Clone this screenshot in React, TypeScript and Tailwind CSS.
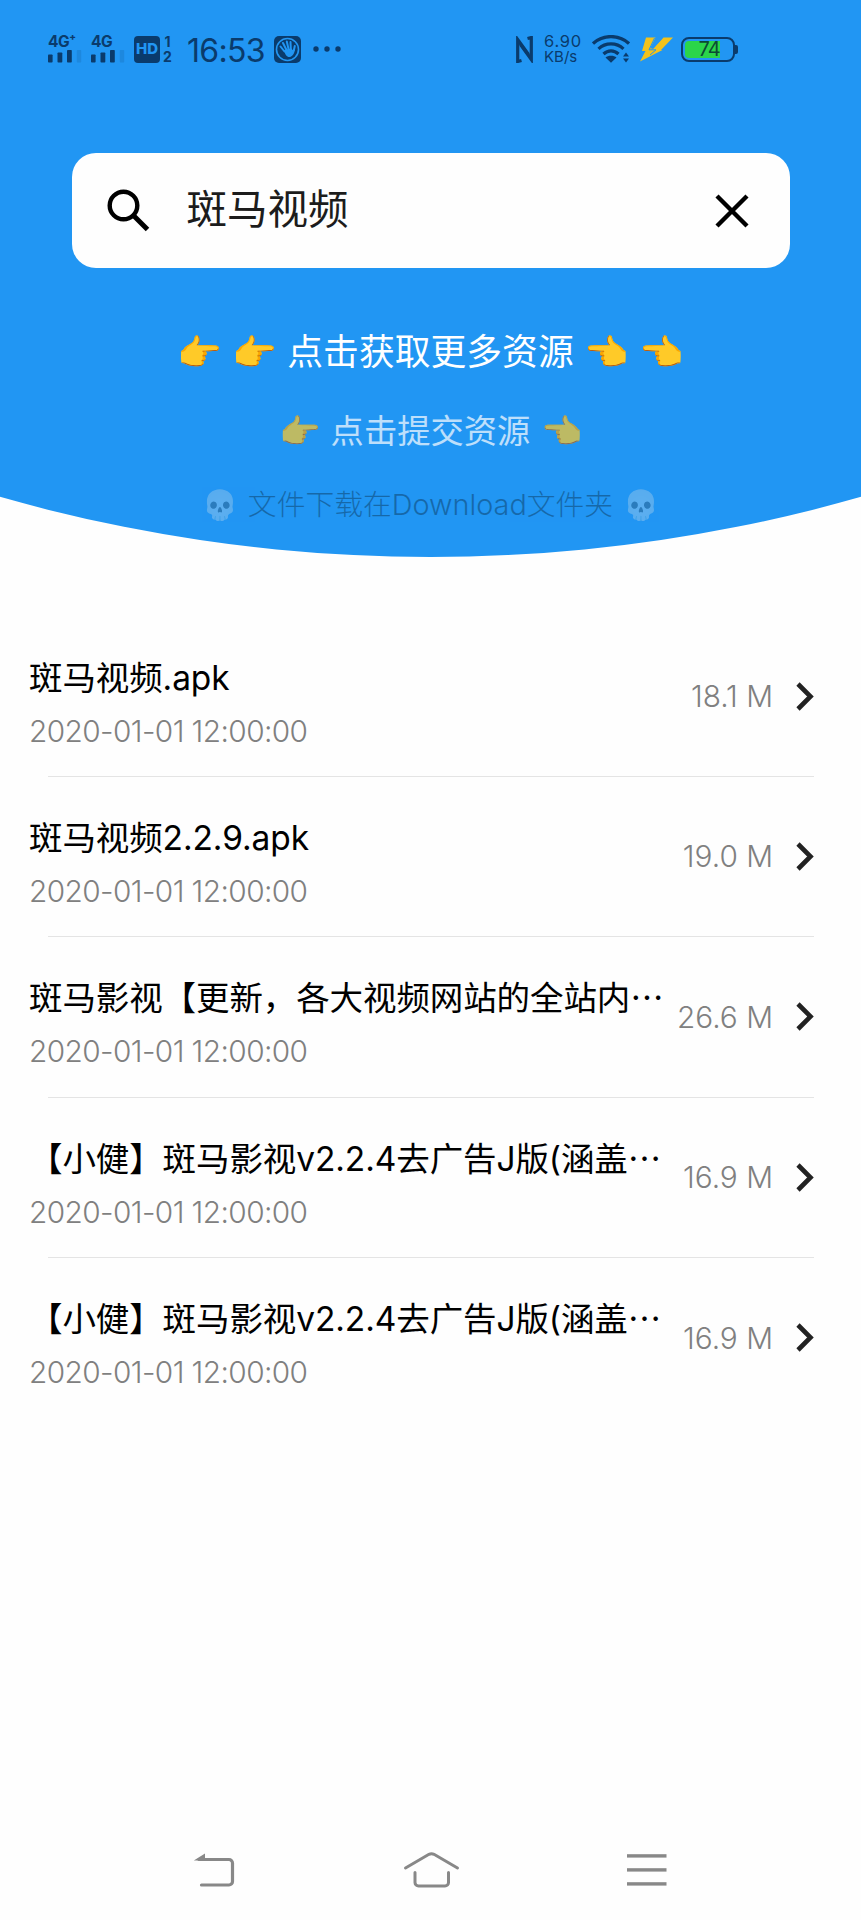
import React from "react";

type FileItem = {
  name: string;
  clipped?: boolean;
  date: string;
  size: string;
};

const files: FileItem[] = [
  { name: "斑马视频.apk", date: "2020-01-01 12:00:00", size: "18.1 M" },
  { name: "斑马视频2.2.9.apk", date: "2020-01-01 12:00:00", size: "19.0 M" },
  { name: "斑马影视【更新，各大视频网站的全站内", clipped: true, date: "2020-01-01 12:00:00", size: "26.6 M" },
  { name: "【小健】斑马影视v2.2.4去广告J版(涵盖", clipped: true, date: "2020-01-01 12:00:00", size: "16.9 M" },
  { name: "【小健】斑马影视v2.2.4去广告J版(涵盖", clipped: true, date: "2020-01-01 12:00:00", size: "16.9 M" },
];

function Signal({ label }: { label: string }) {
  return (
    <div className="flex w-[34px] flex-col">
      <span className="h-[14px] text-[15.5px] leading-[14px] font-bold tracking-[-0.5px] whitespace-nowrap">{label}</span>
      <svg className="mt-px h-[13px] w-[34px]" viewBox="0 0 34 13" fill="currentColor">
        <rect x="0" y="4.5" width="4.6" height="8" rx="0.8" />
        <rect x="9.5" y="2.5" width="4.8" height="10" rx="0.8" />
        <rect x="19" y="0" width="4.8" height="12.5" rx="0.8" />
        <rect x="28.8" y="0" width="4.4" height="12.5" rx="0.8" opacity="0.15" />
      </svg>
    </div>
  );
}

function StatusBar() {
  return (
    <div className="flex h-[98px] items-center pl-[48px] text-[#0a3b6c]">
      <Signal label="4G⁺" />
      <div className="ml-[9px]">
        <Signal label="4G" />
      </div>
      <div className="ml-[9px] flex h-[27px] w-[26px] items-center justify-center rounded-[4px] bg-[#0a3b6c] text-[15px] font-extrabold text-[#2196f3]">
        HD
      </div>
      <div className="ml-[2px] flex w-[11px] flex-col items-center text-[14px] leading-[15px] font-bold">
        <span>1</span>
        <span>2</span>
      </div>
      <span className="ml-[14px] w-[78px] pt-[4px] text-[32px] leading-[40px] tracking-[-0.7px] whitespace-nowrap">16:53</span>
      <svg className="ml-[9px] h-[27px] w-[27px]" viewBox="0 0 27 27" fill="none">
        <rect width="27" height="27" rx="5" fill="#0a3b6c" />
        <circle cx="13.5" cy="13.5" r="11" stroke="#2196f3" strokeWidth="1.6" />
        <path
          d="M6.500 10.500l4 5M9 7l3.500 7M12.800 5.500l1.700 7.500M16.500 6l.3 7M19.800 14.500l1-4.500"
          stroke="#2196f3"
          strokeWidth="2"
          strokeLinecap="round"
        />
        <path d="M10 14l7.500-1.500 1 1.500 2.200-1.500c.3 4.500-2 8-5 8.500-2.700.3-4.700-2-5.700-7z" fill="#2196f3" />
      </svg>
      <svg className="ml-[12px] h-[6px] w-[28px]" viewBox="0 0 28 6" fill="currentColor">
        <circle cx="3" cy="3" r="2.700" />
        <circle cx="14" cy="3" r="2.700" />
        <circle cx="25" cy="3" r="2.700" />
      </svg>

      <svg className="ml-[175px] h-[27px] w-[18px]" viewBox="0 0 18 27" fill="none" stroke="currentColor" strokeWidth="3.200">
        <path d="M5.500 24.500L1.700 25.500V3.500L12.500 18.500" />
        <path d="M11.500 2.500L15.300 1.500V23.500L4.500 8.500" />
      </svg>
      <div className="ml-[10px] flex w-[38px] flex-col text-[16.5px] leading-[15.500px]">
        <span className="tracking-[0.7px]">6.90</span>
        <span className="text-[15px]">KB/s</span>
      </div>
      <svg className="ml-[10px] h-[28px] w-[38px]" viewBox="0 0 38 28" fill="none" stroke="currentColor" strokeWidth="3.200">
        <path d="M1 8.500C11-.8 27-.8 37 8.500" />
        <path d="M6.500 13.800C13.500 7.200 24.500 7.200 31.500 13.800" />
        <path d="M11.500 19C16 14.800 22 14.800 26.500 19" />
        <path d="M13.500 22.500C16 20 22 20 24.500 22.500L19 27.800z" fill="currentColor" stroke="none" />
        <path d="M31 21.500l3-4 3 4zM31 23.500l3 4 3-4z" fill="currentColor" stroke="none" />
      </svg>
      <svg className="ml-[10px] h-[25px] w-[33px]" viewBox="0 0 33 25" fill="#f2c21b">
        <path d="M6 .5h9.500L10 11.500H13.500L23.500.5H33L21 13H22.500L0 24.500 5.500 14H2z" />
        <path d="M14.500 1L9 12.800H16L10 18M12 12.500L22.500.5" stroke="#2196f3" strokeWidth="1" fill="none" />
      </svg>
      <div className="ml-[8px] flex items-center">
        <div className="flex h-[25px] w-[54px] items-center rounded-[8px] border-2 border-[#0a3b6c] p-[2px]">
          <div className="flex h-[17px] w-[35px] items-center justify-end rounded-l-[4px] bg-[#2bd54a] text-[20px] leading-[17px] tracking-[-0.8px] text-[#0b4a33]">
            74
          </div>
        </div>
        <div className="h-[9px] w-[3px] rounded-r-[2px] bg-[#0a3b6c]" />
      </div>
    </div>
  );
}

function SearchBox() {
  return (
    <div className="mx-auto mt-[55px] flex h-[115px] w-[718px] items-center rounded-[24px] bg-[#fefefe]">
      <svg className="ml-[35px] h-[43px] w-[43px]" viewBox="0 0 43 43" fill="none" stroke="#000" strokeWidth="4.400">
        <circle cx="16.500" cy="16.500" r="13.800" />
        <path d="M26.500 26.500L40.500 40.500" strokeWidth="5" />
      </svg>
      <span className="ml-[37px] flex-1 pb-[2px] text-[40.5px] leading-[60px] text-[#1c1c1c]">斑马视频</span>
      <svg className="mr-[41px] h-[34px] w-[34px]" viewBox="0 0 34 34" stroke="#000" strokeWidth="4.400">
        <path d="M2 2L32 32M32 2L2 32" />
      </svg>
    </div>
  );
}

function FileRow({ item, last }: { item: FileItem; last: boolean }) {
  return (
    <li className="flex h-[160.2px] flex-col">
      <div className="flex flex-1 items-center pr-[47px] pl-[29px]">
        <div className="flex-1 pt-[13px]">
          <div className="h-[50px] text-[33.5px] leading-[50px] tracking-[-0.1px] whitespace-nowrap text-black">
            {item.name}
            {item.clipped && <span className="font-['Noto_Sans_CJK_SC',sans-serif] leading-none">…</span>}
          </div>
          <div className="mt-[6px] text-[29.800px] leading-[44px] font-light tracking-[-0.58px] text-[#808080]">{item.date}</div>
        </div>
        <span className="text-[29.800px] font-light text-[#808080]">{item.size}</span>
        <svg className="ml-[23px] h-[29px] w-[18px]" viewBox="0 0 18 29" fill="none" stroke="#222" strokeWidth="4.600">
          <path d="M2 2L14.500 14.500 2 27" />
        </svg>
      </div>
      {!last && <div className="mr-[47px] ml-[48px] h-px bg-[#e4e4e4]" />}
    </li>
  );
}

function NavBar() {
  return (
    <nav className="flex h-[100px] items-center text-[#888]">
      <svg className="ml-[193px] h-[36px] w-[42px]" viewBox="0 0 42 36" fill="none" stroke="currentColor" strokeWidth="3.200">
        <path d="M6 7.500H36a3.500 3.500 0 0 1 3.500 3.500V29.500a3.500 3.500 0 0 1-3.500 3.500H8.500" strokeLinecap="round" />
        <path d="M.8 8.500L12 1.500V8.500z" fill="currentColor" stroke="none" />
      </svg>
      <svg className="ml-[168px] h-[38px] w-[57px]" viewBox="0 0 57 38" fill="none" stroke="currentColor" strokeWidth="3" strokeLinecap="round">
        <path d="M2.500 17L26 3.300Q28.500 2 31 3.300L54.500 17" />
        <path d="M12 21.500V31.500a3.500 3.500 0 0 0 3.500 3.500H42a3.500 3.500 0 0 0 3.500-3.500V21.500" />
      </svg>
      <svg className="ml-[167px] h-[32px] w-[40px]" viewBox="0 0 40 32" fill="currentColor">
        <rect y="0.200" width="39.500" height="3.400" />
        <rect y="14.200" width="39.500" height="3.400" />
        <rect y="28.200" width="39.500" height="3.400" />
      </svg>
    </nav>
  );
}

export default function App() {
  return (
    <div lang="zh-CN" className="flex h-[1920px] w-[861px] flex-col overflow-hidden bg-[#fefefe] font-['Inter','Noto_Sans_CJK_SC',sans-serif]">
      <header className="h-[557px] bg-[#2196f3] [clip-path:circle(1571px_at_50%_-1014px)]">
        <StatusBar />
        <SearchBox />
        <div className="mt-[60px] flex h-[50px] items-center justify-center text-[35.800px] [word-spacing:0.2px] whitespace-pre text-white">
          👉 👉 点击获取更多资源 👈 👈
        </div>
        <div className="mt-[31px] flex h-[46px] items-center justify-center text-[33.300px] [word-spacing:0.8px] whitespace-pre text-white opacity-70">
          👉 点击提交资源 👈
        </div>
        <div className="mt-[30px] flex h-[40px] items-center justify-center text-[28.800px] font-light [word-spacing:1.4px] whitespace-pre text-black opacity-30">
          💀 文件下载在Download文件夹 💀
        </div>
      </header>

      <ul className="mt-[60px] flex-1">
        {files.map((item, i) => (
          <FileRow key={i} item={item} last={i === files.length - 1} />
        ))}
      </ul>

      <NavBar />
    </div>
  );
}
